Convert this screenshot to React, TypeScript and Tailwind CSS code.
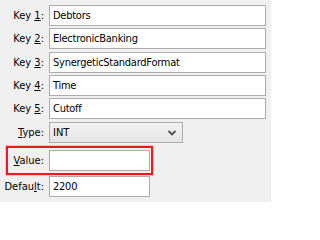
import React from "react";

function Field({ label, value, width = "w-[217px]", className = "" }: { label: React.ReactNode; value: string; width?: string; className?: string }) {
  return (
    <div className={`flex items-center h-[21px] ${className}`}>
      <div className="w-[49px] pr-[5px] text-right whitespace-nowrap">{label}</div>
      <div className={`${width} h-[21px] border border-[#acacac] bg-white pl-[3px] flex items-center whitespace-nowrap overflow-hidden tracking-[-0.25px]`}>{value}</div>
    </div>
  );
}

export default function App() {
  return (
    <div className="w-[271px] h-[202px] bg-[#f0f0f0] pt-[5px] text-[11px] leading-none text-black [font-family:'DejaVu_Sans_Condensed','Liberation_Sans',sans-serif] overflow-hidden">
      <Field label={<>Key <u>1</u>:</>} value="Debtors" />
      <Field className="mt-[2px]" label={<>Key <u>2</u>:</>} value="ElectronicBanking" />
      <Field className="mt-[3px]" label={<>Key <u>3</u>:</>} value="SynergeticStandardFormat" />
      <Field className="mt-[2px]" label={<>Key <u>4</u>:</>} value="Time" />
      <Field className="mt-[2px]" label={<>Key <u>5</u>:</>} value="Cutoff" />
      <div className="flex items-center h-[21px] mt-[3px]">
        <div className="w-[49px] pr-[5px] text-right"><u>T</u>ype:</div>
        <div className="w-[134px] h-[21px] border border-[#acacac] bg-gradient-to-b from-[#f2f2f2] to-[#e5e5e5] pl-[3px] pr-[6px] flex items-center justify-between">
          <span>INT</span>
          <svg width="8" height="6" viewBox="0 0 8 6">
            <path d="M0.5 1 L4 4.5 L7.5 1" fill="none" stroke="#4a4a4a" strokeWidth="1.8" />
          </svg>
        </div>
      </div>
      <div className="ml-[6px] mt-[3px] w-[147px] border-2 border-[#f01818] shadow-[0_0_0_1px_rgba(255,120,120,0.35)] pt-[2px] pb-[2px] pr-[1px] flex items-center">
        <div className="w-[41px] pr-[5px] text-right"><u>V</u>alue:</div>
        <div className="w-[101px] h-[21px] border border-[#acacac] bg-white"></div>
      </div>
      <Field className="mt-[1px]" width="w-[101px]" label={<>Defau<u>l</u>t:</>} value="2200" />
    </div>
  );
}
